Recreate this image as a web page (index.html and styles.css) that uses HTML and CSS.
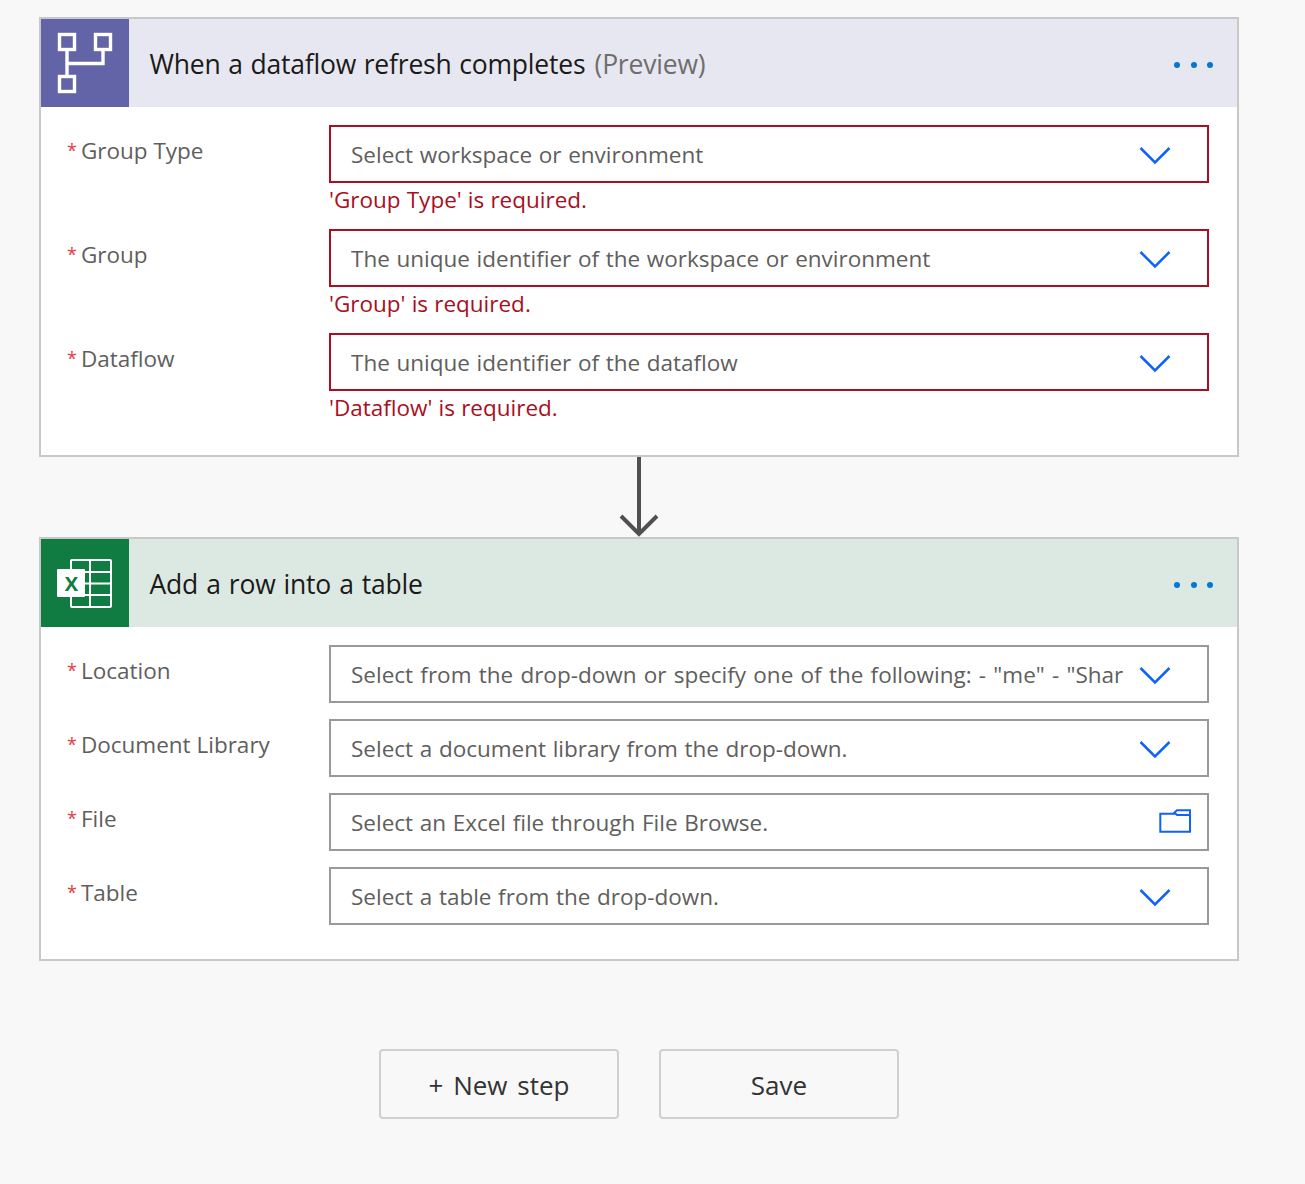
FILE: index.html
```html
<!DOCTYPE html>
<html lang="en">
<head>
  <meta charset="UTF-8" />
  <title>Edit flow</title>
  <link rel="stylesheet" href="styles.css">
</head>
<body>

<main class="flow">

  <section class="card">
    <header class="card-head head-flow">
      <div class="card-icon icon-flow">
        <svg width="88" height="88" viewBox="0 0 88 88" fill="none" stroke="#fff" stroke-width="3.4">
          <rect x="18.5" y="15.5" width="15" height="15" />
          <rect x="54.5" y="15.5" width="15" height="15" />
          <rect x="18.5" y="57.5" width="15" height="15" />
          <path d="M26 31V57M26 44.5H62V31" />
        </svg>
      </div>
      <h2>When a dataflow refresh completes <span class="muted">(Preview)</span></h2>
      <div class="dots"><i></i><i></i><i></i></div>
    </header>
    <div class="card-body">
      <div class="field">
        <label><span class="req">*</span>Group Type</label>
        <div>
          <div class="box error"><span>Select workspace or environment</span>
            <svg class="chev" width="32" height="20" viewBox="0 0 32 20"><path d="M1.5 2L16 16.5L30.5 2" /></svg>
          </div>
          <div class="err-text">'Group Type' is required.</div>
        </div>
      </div>
      <div class="field">
        <label><span class="req">*</span>Group</label>
        <div>
          <div class="box error"><span>The unique identifier of the workspace or environment</span>
            <svg class="chev" width="32" height="20" viewBox="0 0 32 20"><path d="M1.5 2L16 16.5L30.5 2" /></svg>
          </div>
          <div class="err-text">'Group' is required.</div>
        </div>
      </div>
      <div class="field">
        <label><span class="req">*</span>Dataflow</label>
        <div>
          <div class="box error"><span>The unique identifier of the dataflow</span>
            <svg class="chev" width="32" height="20" viewBox="0 0 32 20"><path d="M1.5 2L16 16.5L30.5 2" /></svg>
          </div>
          <div class="err-text">'Dataflow' is required.</div>
        </div>
      </div>
    </div>
  </section>

  <div class="connector">
    <svg width="40" height="80" viewBox="0 0 40 80" fill="none" stroke="#505050" stroke-width="4">
      <path d="M20 0V76M2 59L20 77L38 59" />
    </svg>
  </div>

  <section class="card">
    <header class="card-head head-excel">
      <div class="card-icon icon-excel">
        <svg width="88" height="88" viewBox="0 0 88 88" fill="none" stroke="#fff" stroke-width="2">
          <rect x="30" y="21" width="40" height="47" rx="1" />
          <path d="M49 21V68M30 33H70M30 44.5H70M30 56H70" />
          <rect x="16" y="30" width="28" height="28" rx="1" fill="#fff" stroke="none" />
          <text x="30.5" y="51.7" class="excel-x">X</text>
        </svg>
      </div>
      <h2 class="wide">Add a row into a table</h2>
      <div class="dots"><i></i><i></i><i></i></div>
    </header>
    <div class="card-body">
      <div class="field">
        <label><span class="req">*</span>Location</label>
        <div class="box long"><span>Select from the drop-down or specify one of the following: - "me" - "SharePoint Site URL"</span>
          <svg class="chev" width="32" height="20" viewBox="0 0 32 20"><path d="M1.5 2L16 16.5L30.5 2" /></svg>
        </div>
      </div>
      <div class="field">
        <label><span class="req">*</span>Document Library</label>
        <div class="box"><span>Select a document library from the drop-down.</span>
          <svg class="chev" width="32" height="20" viewBox="0 0 32 20"><path d="M1.5 2L16 16.5L30.5 2" /></svg>
        </div>
      </div>
      <div class="field">
        <label><span class="req">*</span>File</label>
        <div class="box"><span>Select an Excel file through File Browse.</span>
          <svg class="folder" width="32" height="26" viewBox="0 0 32 26" fill="none" stroke="#0f62fe" stroke-width="2">
            <path d="M16 4.7H1.3V22.7H31V1.3H18L15.5 3.6L18 6H31" />
          </svg>
        </div>
      </div>
      <div class="field">
        <label><span class="req">*</span>Table</label>
        <div class="box"><span>Select a table from the drop-down.</span>
          <svg class="chev" width="32" height="20" viewBox="0 0 32 20"><path d="M1.5 2L16 16.5L30.5 2" /></svg>
        </div>
      </div>
    </div>
  </section>

  <div class="actions">
    <button type="button">+ New step</button>
    <button type="button">Save</button>
  </div>

</main>

</body>
</html>
```

FILE: styles.css
```css
body {
  font-family: "Open Sans", "Noto Sans", sans-serif;
  background: #f8f8f8;
  margin: 0;
  color: #605e5c;
}

.flow {
  width: 1200px;
  padding: 17px 0 0 39px;
}

.card {
  border: 2px solid #c8c8c8;
  background: white;
}

.card-head {
  display: flex;
  align-items: center;
  height: 88px;
}
.head-flow {
  background: #e7e7f1;
}
.head-excel {
  background: #dce9e2;
}
.card-icon {
  width: 88px;
  height: 88px;
  flex: none;
}
.card-icon svg {
  display: block;
}
.icon-flow {
  background: #6264a7;
}
.icon-excel {
  background: #107c41;
}
.excel-x {
  font-family: "Open Sans", sans-serif;
  font-size: 20px;
  font-weight: 700;
  fill: #107c41;
  stroke: none;
  text-anchor: middle;
}

h2 {
  margin: 2px 0 0 20.5px;
  font-size: 26.5px;
  font-weight: 400;
  color: #1b1a19;
  flex: 1;
  letter-spacing: -0.2px;
  word-spacing: 1px;
}
h2.wide {
  word-spacing: 1.4px;
}
.muted {
  color: #706e6c;
  margin-left: 1.5px;
}

.dots {
  display: flex;
  gap: 10.5px;
  margin: 4px 24px 0 0;
}
.dots i {
  width: 6px;
  height: 6px;
  border-radius: 50%;
  background: #0078d4;
}

.card-body {
  padding: 18px 28px 18px 26px;
}

.field {
  display: grid;
  grid-template-columns: 262px 880px;
  margin-bottom: 16px;
}
.field label {
  font-size: 22.5px;
  line-height: 50px;
  height: 50px;
}
.req {
  color: #e63946;
  font-size: 18px;
  margin-right: 4px;
  vertical-align: 2px;
}

.box {
  display: flex;
  align-items: center;
  box-sizing: border-box;
  height: 58px;
  border: 2px solid #999;
  padding: 0 36px 0 20px;
  font-size: 22.5px;
  word-spacing: 0.8px;
  background: white;
}
.box.long {
  word-spacing: 1.4px;
}
.box span {
  flex: 1;
  min-width: 0;
  overflow: hidden;
  white-space: nowrap;
}
.box.error {
  border-color: #a80f22;
}
.chev {
  flex: none;
  margin: 4px 0 0 16px;
}
.chev path {
  fill: none;
  stroke: #0f62fe;
  stroke-width: 2.5;
}
.folder {
  flex: none;
  margin-right: -20px;
}

.err-text {
  height: 30px;
  line-height: 34px;
  font-size: 22.5px;
  word-spacing: 0.3px;
  color: #a80f22;
}

.connector {
  height: 80px;
  display: flex;
  justify-content: center;
}
.connector svg {
  display: block;
}

.actions {
  display: flex;
  justify-content: center;
  gap: 40px;
  margin-top: 88px;
}
button {
  width: 240px;
  height: 70px;
  padding-top: 2px;
  background: #f8f8f8;
  border: 2px solid #d0d0d0;
  border-radius: 4px;
  font-family: inherit;
  font-size: 26px;
  word-spacing: 3px;
  color: #333;
}
```
